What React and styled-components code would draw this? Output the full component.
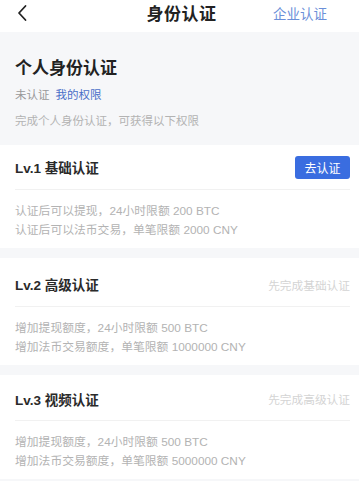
import styled, { createGlobalStyle } from 'styled-components';

const GlobalStyle = createGlobalStyle`
  * { box-sizing: border-box; }
  body {
    margin: 0;
    background: #f6f7f9;
    font-family: "Liberation Sans", "Noto Sans CJK SC", sans-serif;
  }
`;

const Page = styled.div`
  width: 359px;
  min-height: 481px;
  background: #f6f7f9;
  overflow: hidden;
`;

const Header = styled.header`
  height: 32px;
  background: #fff;
  display: grid;
  grid-template-columns: 1fr auto 1fr;
  align-items: center;
  padding: 0 32px 7px 16px;
`;

const Back = styled.button`
  border: none;
  background: none;
  padding: 0;
  width: 20px;
  height: 20px;
  display: flex;
  align-items: center;
`;

const Title = styled.h1`
  margin: 0 0 0 20px;
  font-size: 17px;
  font-weight: 700;
  color: #222;
  letter-spacing: 0.5px;
`;

const HeaderLink = styled.a`
  justify-self: end;
  font-size: 13.5px;
  color: #6b8fd8;
  text-decoration: none;
`;

const Intro = styled.section`
  padding: 25px 15px 15px;
`;

const IntroTitle = styled.h2`
  margin: 0;
  font-size: 17px;
  line-height: 24px;
  font-weight: 700;
  color: #222;
`;

const Status = styled.div`
  margin-top: 5px;
  font-size: 11.5px;
  line-height: 18px;
  color: #999;
  display: flex;
  gap: 6px;
`;

const Rights = styled.span`
  color: #4a6fc8;
`;

const Hint = styled.p`
  margin: 8px 0 0;
  font-size: 11.5px;
  line-height: 18px;
  color: #b3b3b3;
`;

const Card = styled.section`
  background: #fff;
  margin-bottom: 10px;
  padding: 0 9px 0 15px;
`;

const CardHead = styled.div`
  height: ${p => p.$h}px;
  display: flex;
  align-items: center;
  justify-content: space-between;
  border-bottom: 1px solid #f1f1f1;
  padding-top: ${p => p.$pt}px;
`;

const Level = styled.h3`
  margin: 0;
  font-size: 13.5px;
  font-weight: 700;
  color: #2a2a2a;
`;

const Action = styled.button`
  border: none;
  background: #3a6de0;
  color: #fff;
  font-family: inherit;
  font-size: 12px;
  height: 23px;
  width: 55px;
  border-radius: 3px;
  padding: 0;
`;

const Pending = styled.span`
  font-size: 11.7px;
  color: #d4d4d4;
`;

const Perks = styled.ul`
  list-style: none;
  margin: 0;
  padding: 12px 0 9px;
`;

const Perk = styled.li`
  font-size: 11.8px;
  line-height: 18.5px;
  color: #b3b3b3;
`;

const levels = [
  {
    name: 'Lv.1 基础认证',
    action: true,
    h: 45,
    pt: 0,
    perks: ['认证后可以提现，24小时限额 200 BTC', '认证后可以法币交易，单笔限额 2000 CNY'],
  },
  {
    name: 'Lv.2 高级认证',
    pending: '先完成基础认证',
    h: 49,
    pt: 4,
    perks: ['增加提现额度，24小时限额 500 BTC', '增加法币交易额度，单笔限额 1000000 CNY'],
  },
  {
    name: 'Lv.3 视频认证',
    pending: '先完成高级认证',
    h: 46,
    pt: 2,
    perks: ['增加提现额度，24小时限额 500 BTC', '增加法币交易额度，单笔限额 5000000 CNY'],
  },
];

export default function App() {
  return (
    <Page>
      <GlobalStyle />
      <Header>
        <Back aria-label="返回">
          <svg width="12" height="18" viewBox="0 0 12 18" fill="none">
            <path d="M9.5 2 L3 9 L9.5 16" stroke="#222" strokeWidth="1.8" strokeLinecap="round" strokeLinejoin="round" />
          </svg>
        </Back>
        <Title>身份认证</Title>
        <HeaderLink>企业认证</HeaderLink>
      </Header>
      <Intro>
        <IntroTitle>个人身份认证</IntroTitle>
        <Status>
          未认证<Rights>我的权限</Rights>
        </Status>
        <Hint>完成个人身份认证，可获得以下权限</Hint>
      </Intro>
      {levels.map(l => (
        <Card key={l.name}>
          <CardHead $h={l.h} $pt={l.pt}>
            <Level>{l.name}</Level>
            {l.action ? <Action>去认证</Action> : <Pending>{l.pending}</Pending>}
          </CardHead>
          <Perks>
            {l.perks.map(p => (
              <Perk key={p}>{p}</Perk>
            ))}
          </Perks>
        </Card>
      ))}
    </Page>
  );
}
